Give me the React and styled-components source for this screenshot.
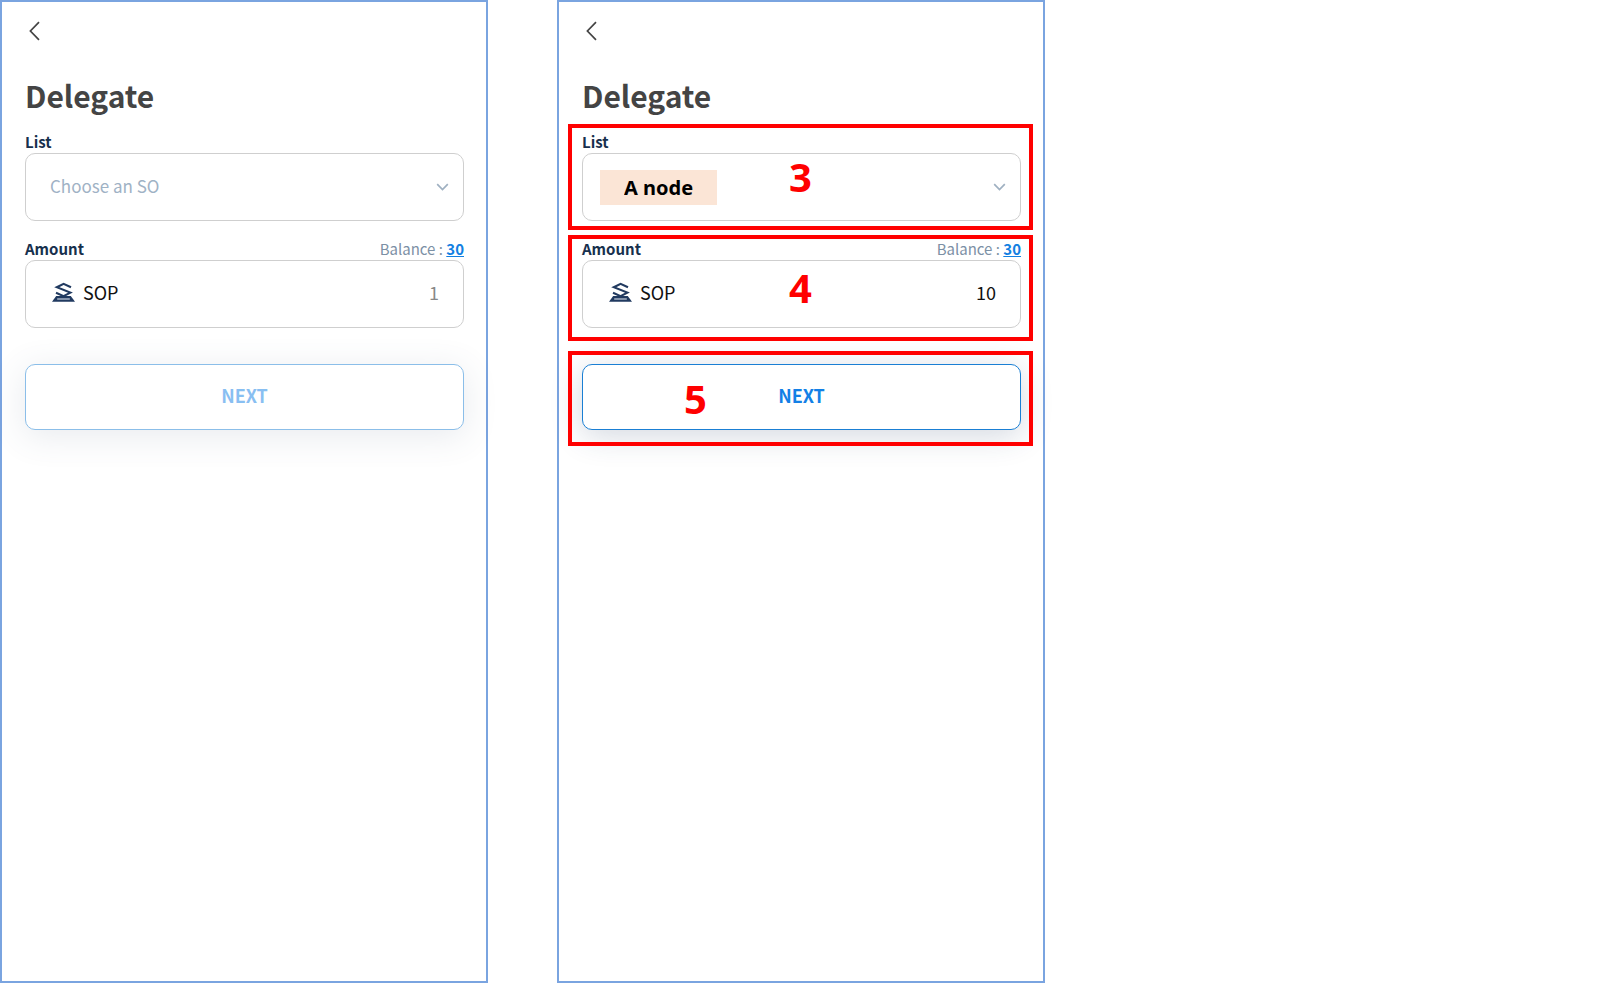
import React from "react";
import styled, { createGlobalStyle, css } from "styled-components";

const GlobalStyle = createGlobalStyle`
  *, *::before, *::after { box-sizing: border-box; }
  body {
    margin: 0;
    background: #fff;
    font-family: "Noto Sans CJK KR", "Noto Sans", sans-serif;
  }
  button, input, select { font: inherit; }
`;

const Page = styled.main`
  display: grid;
  grid-template-columns: 488fr 488fr 486fr;
  column-gap: 69px;
  min-height: 100vh;
`;

const Screen = styled.section`
  display: flex;
  flex-direction: column;
  padding: 12px 22px 24px 23px;
  border: 2px solid #7aa4e0;
`;

const BackButton = styled.button`
  display: flex;
  align-items: center;
  align-self: flex-start;
  height: 34px;
  padding: 0 4px;
  border: 0;
  background: none;
  color: #444;
  cursor: pointer;
`;

const Title = styled.h1`
  margin: 23px 0 11px;
  color: #444;
  font-size: 30px;
  font-weight: 700;
  line-height: 48px;
`;

const Field = styled.div`
  position: relative;
  margin-bottom: 16px;
`;

const FieldHead = styled.div`
  display: flex;
  justify-content: space-between;
  height: 23px;
  font-size: 15px;
  line-height: 24px;
`;

const Label = styled.label`
  color: #17304d;
  font-weight: 700;
`;

const Balance = styled.span`
  color: #7c90a5;
`;

const BalanceLink = styled.a`
  color: #1380e2;
  font-weight: 700;
  text-decoration: underline;
`;

const Box = styled.div`
  position: relative;
  display: flex;
  align-items: center;
  height: 68px;
  border: 1px solid #cfcfcf;
  border-radius: 10px;
  color: #111;
  font-size: 18px;
`;

const Select = styled.select`
  width: 100%;
  height: 100%;
  padding: 0 48px 4px 24px;
  border: 0;
  border-radius: 10px;
  appearance: none;
  background: none;
  color: #9fb2c5;
  font-size: 17px;
  ${(p) =>
    p.$chosen &&
    css`
      padding: 0 48px 0 41px;
      background: linear-gradient(#fbe5d6, #fbe5d6) 17px center / 117px 35px no-repeat;
      color: #000;
      font-family: "Noto Sans", sans-serif;
      font-size: 20px;
      font-weight: 700;
    `}
`;

const Chevron = styled.svg`
  position: absolute;
  right: 14px;
  pointer-events: none;
`;

const Token = styled.span`
  display: flex;
  align-items: center;
  gap: 8px;
  padding: 0 0 4px 26px;
`;

const AmountInput = styled.input`
  flex: 1;
  min-width: 0;
  height: 100%;
  padding: 0 24px 4px;
  border: 0;
  border-radius: 10px;
  background: none;
  color: #111;
  text-align: right;
  &::placeholder { color: #888; opacity: 1; }
`;

const Action = styled.div`
  position: relative;
  margin-top: 20px;
`;

const NextButton = styled.button`
  width: 100%;
  height: 66px;
  padding: 0 0 4px;
  border: 1px solid #1a7fd4;
  border-radius: 10px;
  background: #fff;
  box-shadow: 0 6px 32px rgba(35, 60, 100, 0.2);
  color: #1380e6;
  font-size: 18px;
  font-weight: 700;
  &:disabled { opacity: 0.5; }
`;

const Callout = styled.div`
  position: absolute;
  inset: ${(p) => p.$inset};
  display: flex;
  align-items: center;
  border: 4px solid #f00;
  color: #f00;
  pointer-events: none;
`;

const CalloutNumber = styled.strong`
  width: ${(p) => (p.$left ? "54%" : "100%")};
  font-family: "Noto Sans", sans-serif;
  font-size: 40px;
  line-height: 48px;
  text-align: center;
`;

function Mark({ number, inset, left }) {
  return (
    <Callout $inset={inset}>
      <CalloutNumber $left={left}>{number}</CalloutNumber>
    </Callout>
  );
}

function TokenIcon() {
  return (
    <svg width="23" height="20" viewBox="0 0 23 20" fill="none" aria-hidden="true">
      <path d="M0 19.8 4.2 14H18.8L23 19.8Z" fill="#213a60" />
      <path d="M5.2 17H17.8" stroke="#a9b5c6" strokeWidth="1.5" />
      <path
        d="M19 5.2 11.6 1.8 4.8 5.2 18.4 10.6 11.6 14.2 4 10.8"
        stroke="#213a60"
        strokeWidth="2.1"
      />
    </svg>
  );
}

function DelegateScreen({ id, node, amount, marked }) {
  return (
    <Screen>
      <BackButton type="button" aria-label="Back">
        <svg width="11" height="20" viewBox="0 0 11 20" fill="none" aria-hidden="true">
          <path d="M10 1.2 1.4 10 10 18.8" stroke="currentColor" strokeWidth="1.7" />
        </svg>
      </BackButton>
      <Title>Delegate</Title>

      <Field>
        <FieldHead>
          <Label htmlFor={`${id}-node`}>List</Label>
        </FieldHead>
        <Box>
          <Select id={`${id}-node`} $chosen={Boolean(node)} defaultValue={node || ""}>
            <option value="">Choose an SO</option>
            <option value="A node">A node</option>
          </Select>
          <Chevron width="13" height="8" viewBox="0 0 13 8" fill="none" aria-hidden="true">
            <path d="M1.2 1.2 6.5 6.5 11.8 1.2" stroke="#9fb0c1" strokeWidth="1.7" />
          </Chevron>
        </Box>
        {marked && <Mark number="3" inset="-6px -12px -9px -14px" />}
      </Field>

      <Field>
        <FieldHead>
          <Label htmlFor={`${id}-amount`}>Amount</Label>
          <Balance>
            Balance : <BalanceLink href="#balance">30</BalanceLink>
          </Balance>
        </FieldHead>
        <Box>
          <Token>
            <TokenIcon />
            SOP
          </Token>
          <AmountInput
            id={`${id}-amount`}
            inputMode="decimal"
            placeholder="1"
            defaultValue={amount}
          />
        </Box>
        {marked && <Mark number="4" inset="-2px -12px -13px -14px" />}
      </Field>

      <Action>
        <NextButton type="button" disabled={!amount}>
          NEXT
        </NextButton>
        {marked && <Mark number="5" inset="-13px -12px -16px -14px" left />}
      </Action>
    </Screen>
  );
}

export default function App() {
  return (
    <>
      <GlobalStyle />
      <Page>
        <DelegateScreen id="empty" />
        <DelegateScreen id="filled" node="A node" amount="10" marked />
      </Page>
    </>
  );
}
